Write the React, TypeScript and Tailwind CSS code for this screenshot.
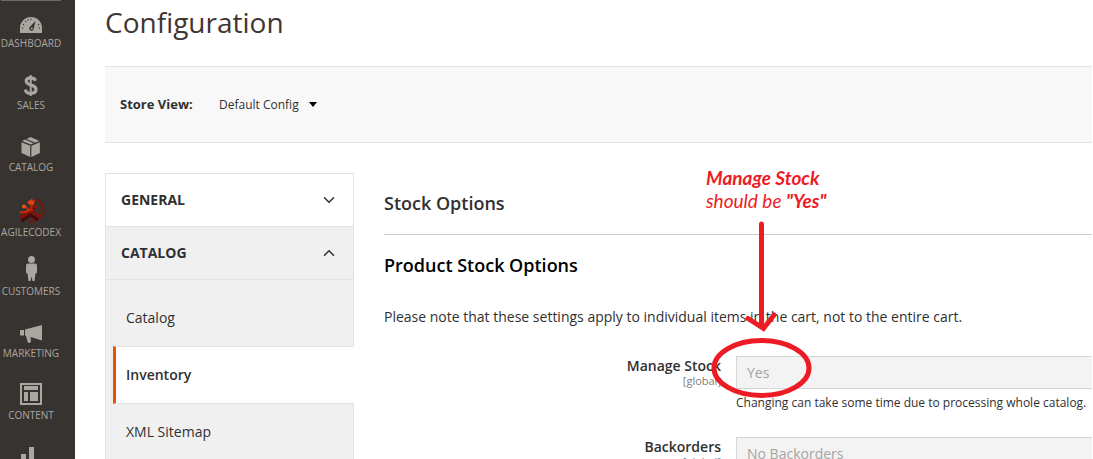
import type { ReactNode } from "react";
import { ChevronDown, ChevronUp } from "lucide-react";

interface MenuItem {
  label: string;
  icon: ReactNode;
  branded?: boolean;
}

const menuItems: MenuItem[] = [
  {
    label: "DASHBOARD",
    icon: (
      <>
        <path d="M5 29v-5a11 11 0 0 1 22 0v5z" fill="currentColor" />
        <g fill="#373330">
          <circle cx="7.5" cy="24" r=".7" />
          <circle cx="8.5" cy="20.5" r=".7" />
          <circle cx="10.5" cy="17.5" r=".7" />
          <circle cx="13" cy="16" r=".7" />
          <circle cx="16" cy="15.2" r=".7" />
          <circle cx="23.5" cy="20.5" r=".7" />
          <circle cx="24.5" cy="24" r=".7" />
          <path d="M20.5 17l-1.7 7.5a2.3 2.3 0 1 1-3.8-1.8z" />
        </g>
        <circle cx="16.8" cy="24.4" r="1" fill="currentColor" />
      </>
    ),
  },
  {
    label: "SALES",
    icon: (
      <g fill="none" stroke="currentColor">
        <path d="M20.5 14.8c-.6-2-2.3-3-4.8-3-2.8 0-4.5 1.2-4.5 3.3 0 5.3 9.8 2.7 9.8 8.2 0 2.6-2.1 4.1-5.2 4.1-3 0-5-1.4-5.4-4" strokeWidth="3.2" />
        <path d="M15.7 9v21" strokeWidth="2" />
      </g>
    ),
  },
  {
    label: "CATALOG",
    icon: (
      <g fill="currentColor">
        <path d="M6.5 14.3l8.7 3.5v11.2l-8.7-4z" />
        <path d="M24.9 14.3l-8.5 3.5v11.2l8.5-4z" />
        <path d="M7 13l3-1.4 8.6 3.7-2.9 1.3z" />
        <path d="M11.5 10.9l4.2-1.9 8.7 3.9-4.2 1.8z" />
      </g>
    ),
  },
  {
    label: "AGILECODEX",
    branded: true,
    icon: (
      <g fill="none">
        <path d="M20 9.5c5 .5 8.5 4.5 8.5 9.5 0 7-6 12.5-14.5 13" stroke="#7a1309" strokeWidth="1.8" />
        <path d="M6.5 31l9-6 7.5 5" stroke="#4a0705" strokeWidth="3" />
        <path d="M5.5 27.5l10.5-6.5 9 5.5" stroke="#8a0f06" strokeWidth="3" />
        <path d="M16.5 21v-6l3-5" stroke="#b3240a" strokeWidth="2.6" />
        <path d="M4.5 22.5l6-.5 4-2-4-3" stroke="#c92d0a" strokeWidth="2" />
        <path d="M18 19l5-3" stroke="#6e0d06" strokeWidth="2.4" />
        <path d="M12.5 13.5l1.5-4 1 2L17 8l.5 3.500 1.500-1v4h-4z" fill="#e8430f" />
        <circle cx="9" cy="16.5" r="2" fill="#f0521a" />
        <circle cx="21" cy="16.5" r="1.900" fill="#8f1708" />
      </g>
    ),
  },
  {
    label: "CUSTOMERS",
    icon: (
      <g fill="currentColor">
        <circle cx="16.5" cy="7.5" r="3.5" />
        <path d="M13 11.5h7q2 0 2 2v6.5q0 1.5-1.5 1.5l-1 7.5h-2l-1-4.5-1 4.5h-2l-1-7.5q-1.5 0-1.5-1.5v-6.5q0-2 2-2z" />
      </g>
    ),
  },
  {
    label: "MARKETING",
    icon: (
      <g fill="currentColor">
        <path d="M5.5 16h3.5v5.5H5.5l-.5-.5v-4z" />
        <path d="M10 15.5L27 11v15.5l-11.5-3.5.5 5.2-3 .8-2-7-1-.5z" />
      </g>
    ),
  },
  {
    label: "CONTENT",
    icon: (
      <>
        <rect x="6" y="8" width="20" height="20" fill="none" stroke="currentColor" strokeWidth="2" />
        <g fill="currentColor">
          <rect x="9" y="10" width="14" height="4" />
          <rect x="9" y="16" width="4" height="9" />
          <rect x="15" y="16" width="8" height="9" />
        </g>
      </>
    ),
  },
  {
    label: "REPORTS",
    icon: (
      <g fill="currentColor">
        <rect x="6" y="16" width="5" height="14" />
        <rect x="14" y="9" width="5" height="21" />
        <rect x="22" y="22" width="5" height="8" />
      </g>
    ),
  },
];

function Sidebar() {
  return (
    <nav className="w-[75px] shrink-0 bg-[#373330] text-[#aaa6a0]">
      <div className="ml-px h-1 w-[60px] border-t border-[#736963]" />
      {menuItems.map((item) => (
        <a key={item.label} href="#" className="flex h-[62px] w-[62px] flex-col items-center">
          <svg viewBox="0 0 32 32" className="size-8 shrink-0 overflow-visible" aria-hidden="true">
            {item.icon}
          </svg>
          <span className={item.branded ? "pt-[3px] text-[10px] leading-[14px]" : "text-[10px] leading-[14px]"}>
            {item.label}
          </span>
        </a>
      ))}
    </nav>
  );
}

function ConfigNav() {
  return (
    <div className="w-[249px] shrink-0 border border-[#e3e3e3] text-[14px] text-[#303030]">
      <button className="flex h-[52px] w-full items-center justify-between px-[15px] font-bold">
        <span className="pb-0.5">GENERAL</span>
        <ChevronDown size={18} strokeWidth={2} />
      </button>
      <button className="flex h-[54px] w-full items-center justify-between border-y border-[#e3e3e3] bg-[#f0f0f0] px-[15px] font-bold">
        <span className="pb-0.5">CATALOG</span>
        <ChevronUp size={18} strokeWidth={2} />
      </button>
      <ul className="bg-[#f0f0f0] pt-[10px]">
        <li>
          <a href="#" className="flex h-14 items-center pb-0.5 pl-5">Catalog</a>
        </li>
        <li className="-mr-px ml-[7px]">
          <a href="#" className="flex h-[58px] items-center border-y border-l-[3px] border-y-[#e3e3e3] border-l-[#eb5202] bg-white pb-0.5 pl-[10px] font-semibold">
            Inventory
          </a>
        </li>
        <li>
          <a href="#" className="flex h-14 items-center pb-0.5 pl-5">XML Sitemap</a>
        </li>
      </ul>
    </div>
  );
}

interface SettingProps {
  id: string;
  label: string;
  value: string;
  note?: string;
  marked?: boolean;
}

function Setting({ id, label, value, note, marked }: SettingProps) {
  return (
    <div className="flex h-[81px] gap-[15px]">
      <label htmlFor={id} className="w-[337px] shrink-0 text-right text-[14px] leading-5 font-semibold text-[#303030]">
        {label}
        <span className="block text-[11px] leading-[10px] font-normal text-[#808080]">[global]</span>
      </label>
      <div className="relative grow">
        <select
          id={id}
          disabled
          className="block h-[33px] w-full appearance-none border border-r-0 border-[#d6d6d6] bg-[#f3f3f3] px-[10px] text-[14px] text-[#a3a3a3] opacity-100"
        >
          <option>{value}</option>
        </select>
        {note && <p className="pt-1 text-[12px] leading-5 whitespace-nowrap text-[#303030]">{note}</p>}
        {marked && <Callout />}
      </div>
    </div>
  );
}

// Red note, arrow and circle drawn over the "Manage Stock" field
function Callout() {
  return (
    <div className="pointer-events-none absolute -top-[190px] -left-[30px] w-[160px] font-[Lato] text-[19px] leading-[23px] text-[#ed1c24] italic">
      <p className="font-bold">Manage Stock</p>
      <p>
        should be <strong>"Yes"</strong>
      </p>
      <svg viewBox="0 0 110 190" className="absolute top-[46px] left-0 h-[190px] w-[110px]" fill="none" stroke="currentColor" aria-hidden="true">
        <path d="M55.5 12V114" strokeWidth="5" strokeLinecap="round" />
        <path d="M42 106.5L57.5 116.5L68 103" strokeWidth="5" strokeLinecap="round" />
        <ellipse cx="55.5" cy="156" rx="47.5" ry="27.5" strokeWidth="5" />
      </svg>
    </div>
  );
}

export default function App() {
  return (
    <div className="flex h-screen overflow-hidden bg-white font-['Open_Sans',sans-serif] text-[#41362f]">
      <Sidebar />
      <main className="min-w-0 grow pr-px pl-[30px]">
        <h1 className="pt-0.5 text-[28px] leading-10">Configuration</h1>
        <div className="mt-6 flex h-[77px] items-center border-y border-[#e3e3e3] bg-[#f8f8f8] pl-[15px] text-[#303030]">
          <span className="w-[99px] text-[13px] font-bold">Store View:</span>
          <button className="flex items-center gap-[10px] text-[12px]">
            Default Config
            <svg viewBox="0 0 8 5" className="h-[5px] w-2" aria-hidden="true">
              <path d="M0 0h8L4 5z" fill="#000" />
            </svg>
          </button>
        </div>
        <div className="mt-[30px] flex gap-[30px]">
          <ConfigNav />
          <section className="min-w-0 grow">
            <h2 className="h-[62px] border-b border-[#cccccc] pt-[18px] text-[18px] leading-6 font-semibold text-[#303030]">
              Stock Options
            </h2>
            <h3 className="pt-[18px] text-[18px] leading-6 font-semibold text-black">Product Stock Options</h3>
            <p className="py-[30px] pb-[29px] text-[14px] leading-5 whitespace-nowrap text-[#303030]">
              Please note that these settings apply to individual items in the cart, not to the entire cart.
            </p>
            <Setting
              id="manage-stock"
              label="Manage Stock"
              value="Yes"
              note="Changing can take some time due to processing whole catalog."
              marked
            />
            <Setting id="backorders" label="Backorders" value="No Backorders" />
          </section>
        </div>
      </main>
    </div>
  );
}
